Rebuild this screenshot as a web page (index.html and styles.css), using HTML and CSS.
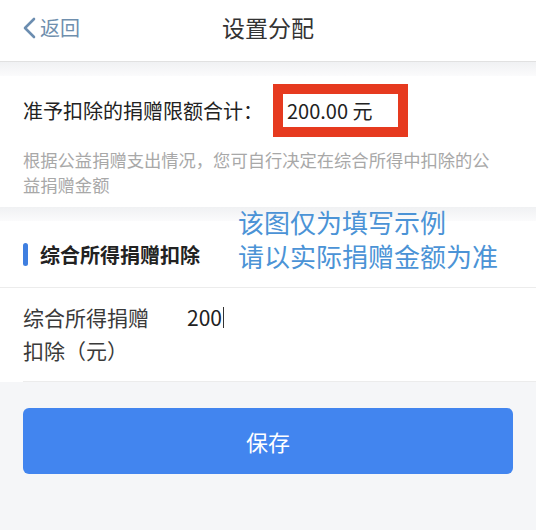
FILE: index.html
```html
<!DOCTYPE html>
<html lang="zh">
<head>
<meta charset="utf-8">
<link rel="stylesheet" href="styles.css">
</head>
<body>
<div class="page">
  <header class="nav">
    <div class="back">
      <svg class="chev" width="14" height="22" viewBox="0 0 14 22"><path d="M12 2 L3 11 L12 20" fill="none" stroke="#6b8db0" stroke-width="2.6" stroke-linecap="round" stroke-linejoin="round"/></svg>
      <span>返回</span>
    </div>
    <div class="title">设置分配</div>
  </header>
  <div class="band"></div>
  <section class="limit">
    <div class="limit-row">
      <span class="limit-label">准予扣除的捐赠限额合计：</span>
      <span class="redbox">200.00 元</span>
    </div>
    <p class="desc">根据公益捐赠支出情况，您可自行决定在综合所得中扣除的公益捐赠金额</p>
  </section>
  <div class="band"></div>
  <section class="alloc">
    <div class="sec-head"><span class="bar"></span><span class="sec-title">综合所得捐赠扣除</span></div>
    <div class="input-row">
      <div class="in-label">综合所得捐赠扣除（元）</div>
      <div class="in-value">200<span class="caret"></span></div>
    </div>
  </section>
  <div class="footer">
    <button class="save">保存</button>
  </div>
  <div class="note">该图仅为填写示例<br>请以实际捐赠金额为准</div>
</div>
</body>
</html>
```
FILE: styles.css
```css
html, body { margin: 0; padding: 0; }
body {
  font-family: "Noto Sans CJK SC", "Noto Sans", sans-serif;
  background: #f5f6f8;
  width: 536px;
  height: 530px;
  overflow: hidden;
}
.page { position: relative; width: 536px; height: 530px; background: #f5f6f8; }
.nav {
  position: relative;
  height: 61px;
  background: #fff;
  border-bottom: 1px solid #e1e1e1;
  display: flex;
  align-items: center;
  justify-content: center;
}
.back {
  position: absolute;
  left: 22px;
  top: 17px;
  display: flex;
  align-items: center;
  gap: 4px;
  color: #6f8fae;
  font-size: 20px;
  line-height: 22px;
}
.chev { display: block; }
.title { font-size: 23px; color: #333; line-height: 30px; margin-top: -8px; }
.band { height: 14px; background: linear-gradient(#f0f1f3, #fbfbfc); }
.limit { background: #fff; padding: 8px 23px 10px; }
.limit-row { display: flex; align-items: center; }
.limit-label { font-size: 20px; color: #222; width: 240px; margin-right: 10px; }
.redbox {
  box-sizing: border-box;
  width: 135px;
  height: 53px;
  border: 10px solid #e63a1f;
  padding-left: 4px;
  font-size: 20px;
  line-height: 33px;
  color: #222;
  background: #fff;
}
.desc {
  margin: 10px 0 0;
  width: 475px;
  font-size: 17.3px;
  line-height: 25px;
  color: #a8a8a8;
}
.alloc { background: #fff; }
.sec-head {
  height: 66px;
  display: flex;
  align-items: center;
  padding-left: 23px;
  border-bottom: 1px solid #ececec;
}
.bar { width: 5px; height: 23px; border-radius: 3px; background: #3f7fe0; margin-right: 12px; }
.sec-title { font-size: 20px; font-weight: bold; color: #222; }
.input-row {
  margin-left: 23px;
  padding: 13px 0 14px;
  display: flex;
  align-items: flex-start;
  border-bottom: 1px solid #ececec;
}
.in-label { width: 132px; font-size: 21px; line-height: 33px; color: #3a3a3a; }
.in-value { margin-left: 32px; font-size: 21px; line-height: 33px; color: #222; display: flex; align-items: center; }
.caret { display: inline-block; width: 1px; height: 21px; background: #333; margin-left: 1px; }
.footer { padding: 26px 23px 0; }
.save {
  display: block;
  width: 100%;
  height: 66px;
  border: none;
  border-radius: 6px;
  background: #4285ef;
  color: #fff;
  font-family: inherit;
  font-size: 22px;
}
.note {
  position: absolute;
  left: 238px;
  top: 205px;
  font-size: 26px;
  line-height: 34px;
  color: #4b93d6;
}
```
